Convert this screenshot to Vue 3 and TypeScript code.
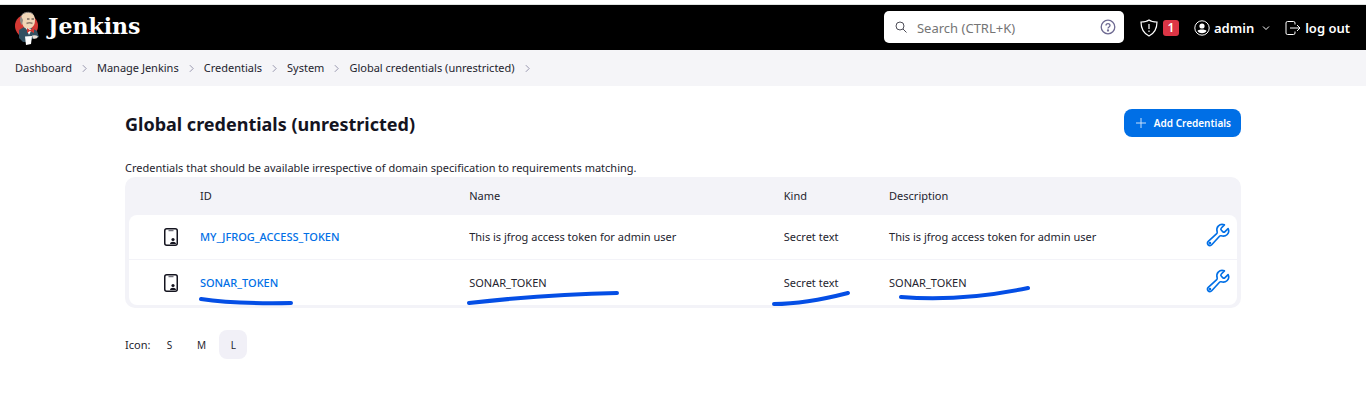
<script setup lang="ts">
import { ref } from 'vue'

interface Credential {
  id: string
  name: string
  kind: string
  description: string
}

const crumbs: string[] = [
  'Dashboard',
  'Manage Jenkins',
  'Credentials',
  'System',
  'Global credentials (unrestricted)',
]

const credentials: Credential[] = [
  {
    id: 'MY_JFROG_ACCESS_TOKEN',
    name: 'This is jfrog access token for admin user',
    kind: 'Secret text',
    description: 'This is jfrog access token for admin user',
  },
  { id: 'SONAR_TOKEN', name: 'SONAR_TOKEN', kind: 'Secret text', description: 'SONAR_TOKEN' },
]

const sizes: string[] = ['S', 'M', 'L']
const activeSize = ref<string>('L')
const query = ref<string>('')
</script>

<template>
  <div class="page">
    <header class="header">
      <a href="#" class="brand">
        <svg class="mascot" viewBox="0 0 26 34" aria-hidden="true">
          <ellipse cx="12.500" cy="15" rx="11.500" ry="11.500" fill="#d33833" />
          <path d="M5 19 L10 16 L18 17 L23 20 L25 26 L18 28 L16 31 L9 31 L5 27 Z" fill="#335061" />
          <path d="M7 8 C7 3 10 1 13.500 1 C18 1 21 4 21 9 C21 14 19 17 14 18 C10 18 8 14 7 8 Z" fill="#f0d6b7" />
          <path d="M7 5 C5 8 6 12 8 14 L9 9 Z" fill="#8f8a84" />
          <path d="M7 5 C9 1 16 0 19 3" fill="none" stroke="#6d6b6d" />
          <path d="M13 8 h2.500 M17.500 8 h2.500" fill="none" stroke="#3b3030" />
          <path d="M12.500 12.500 q3 -1.500 6 0" fill="none" stroke="#8f7a6a" stroke-width="1.400" />
          <path d="M12 17 L15 24 L18 18 Z" fill="#fff" />
          <path d="M13 17 L16 19 L20 16 L20 22 L16 20 L13 22 Z" fill="#d33833" />
          <path d="M11 25.500 L18 25 L17 33 L12 34 Z" fill="#fff" />
          <path d="M18 24.500 q4 -1 6 1 q-1 3 -5 2 Z" fill="#e6ded5" />
        </svg>
        <span class="brand-name">Jenkins</span>
      </a>
      <div class="header-tools">
        <form class="search" role="search" @submit.prevent>
          <svg class="search-icon" viewBox="0 0 12 12" aria-hidden="true">
            <circle cx="5" cy="5" r="4" />
            <path d="M8 8 L11.500 11.500" />
          </svg>
          <input v-model="query" type="search" aria-label="Search" placeholder="Search (CTRL+K)" />
          <a href="#" class="help" aria-label="Search help">
            <svg viewBox="0 0 16 16" aria-hidden="true">
              <circle cx="8" cy="8" r="6.800" />
              <path d="M6 6.500 C6 4 10 4 10 6.500 C10 8 8 8 8 9.500" />
              <circle cx="8" cy="11.500" r=".5" />
            </svg>
          </a>
        </form>
        <a href="#" class="alerts" aria-label="Security warnings">
          <svg viewBox="0 0 18 18" aria-hidden="true">
            <path d="M9 1 C7 2.500 4 3 1 3 C1 10 3 14 9 17 C15 14 17 10 17 3 C14 3 11 2.500 9 1 Z" />
            <path d="M9 5 V10 M9 11.500 V13" />
          </svg>
          <span class="badge">1</span>
        </a>
        <a href="#" class="user">
          <svg class="avatar" viewBox="0 0 16 16" aria-hidden="true">
            <circle cx="8" cy="8" r="7.200" />
            <circle cx="8" cy="6" r="2.600" class="solid" />
            <path class="solid" d="M3.500 11 C4 9 12 9 12.500 11 C10.500 14 5.500 14 3.500 11 Z" />
          </svg>
          <span>admin</span>
          <svg class="caret" viewBox="0 0 8 8" aria-hidden="true"><path d="M1 2.500 L4 5.500 L7 2.500" /></svg>
        </a>
        <a href="#" class="logout">
          <svg viewBox="0 0 16 16" aria-hidden="true">
            <path d="M10 4.500 V3 Q10 1.500 8.500 1.500 H2.500 Q1 1.500 1 3 V13 Q1 14.500 2.500 14.500 H8.500 Q10 14.500 10 13 V11.500" />
            <path d="M5 8 H15 M12 5 L15 8 L12 11" />
          </svg>
          <span>log out</span>
        </a>
      </div>
    </header>

    <nav class="crumbs" aria-label="Breadcrumb">
      <template v-for="crumb in crumbs" :key="crumb">
        <a href="#">{{ crumb }}</a>
        <svg viewBox="0 0 6 10" aria-hidden="true"><path d="M1 1 L5 5 L1 9" /></svg>
      </template>
    </nav>

    <main class="content">
      <div class="title-bar">
        <h1>Global credentials (unrestricted)</h1>
        <button type="button" class="add">
          <svg viewBox="0 0 10 10" aria-hidden="true"><path d="M5 0 V10 M0 5 H10" /></svg>
          <span>Add Credentials</span>
        </button>
      </div>
      <p class="intro">Credentials that should be available irrespective of domain specification to requirements matching.</p>

      <div class="table-box">
        <table>
          <colgroup>
            <col class="c-icon" />
            <col class="c-id" />
            <col class="c-name" />
            <col class="c-kind" />
            <col />
            <col class="c-tool" />
          </colgroup>
          <thead>
            <tr>
              <th></th>
              <th scope="col">ID</th>
              <th scope="col">Name</th>
              <th scope="col">Kind</th>
              <th scope="col">Description</th>
              <th></th>
            </tr>
          </thead>
          <tbody>
            <tr v-for="item in credentials" :key="item.id">
              <td class="type">
                <svg viewBox="0 0 14 18" aria-hidden="true">
                  <rect x=".75" y=".75" width="12.500" height="16.500" rx="2" />
                  <path d="M4.500 2.500 H9.500" class="clip" />
                  <circle cx="9" cy="11.500" r="1.600" class="solid" />
                  <path class="solid" d="M6 16 C6 13 12 13 12 16 Z" />
                </svg>
              </td>
              <td><a href="#">{{ item.id }}</a></td>
              <td>{{ item.name }}</td>
              <td>{{ item.kind }}</td>
              <td>{{ item.description }}</td>
              <td class="tool">
                <a href="#" :aria-label="`Update ${item.id}`">
                  <svg viewBox="0 0 512 512" aria-hidden="true">
                    <path d="M393.870 190a32.100 32.100 0 0 1-45.250 0l-26.570-26.570a32.090 32.090 0 0 1 0-45.260L382.190 58a1 1 0 0 0-.3-1.640c-38.820-16.640-89.150-8.160-121.110 23.570-30.580 30.350-32.320 76-21.120 115.840a31.930 31.930 0 0 1-9.060 32.080L64 380a48.170 48.170 0 1 0 68 68l153.860-167a31.930 31.930 0 0 1 31.600-9.130c39.540 10.590 84.540 8.600 114.720-21.190 32.490-32 39.500-88.560 23.750-120.930a1 1 0 0 0-1.600-.26z" />
                    <circle cx="96" cy="416" r="12" />
                  </svg>
                </a>
              </td>
            </tr>
          </tbody>
        </table>
        <svg class="marks" aria-hidden="true">
          <path d="M76 122 Q108 127 166 126" />
          <path d="M344 126 Q425 117 492 116" />
          <path d="M649 127 Q680 127 723 116" />
          <path d="M776 120 Q835 125 903 111" />
        </svg>
      </div>

      <div class="sizes">
        <span class="sizes-label">Icon:</span>
        <button
          v-for="size in sizes"
          :key="size"
          type="button"
          :class="{ active: size === activeSize }"
          @click="activeSize = size"
        >{{ size }}</button>
      </div>
    </main>
  </div>
</template>

<style>
body {
  margin: 0;
  background: #fff;
}
</style>

<style scoped>
.page {
  font-family: "Noto Sans", "Open Sans", sans-serif;
  font-size: 11px;
  line-height: 16px;
  color: #24242e;
}
.page * {
  box-sizing: border-box;
}
svg {
  display: block;
  flex: none;
  fill: none;
  stroke: currentColor;
}
a {
  color: inherit;
  text-decoration: none;
}
button,
input {
  font: inherit;
  color: inherit;
  border: 0;
}
.header {
  display: flex;
  align-items: center;
  justify-content: space-between;
  height: 46px;
  margin-top: 4px;
  padding: 0 16px 0 14px;
  border-top: 1px solid #dfe3e1;
  background: #000;
  color: #fff;
}
.brand {
  display: flex;
  align-items: center;
  gap: 8px;
}
.mascot {
  width: 26px;
  height: 34px;
  stroke: none;
}
.brand-name {
  padding-bottom: 4px;
  font: bold 22px/32px "DejaVu Serif", serif;
}
.header-tools,
.alerts,
.user,
.logout {
  display: flex;
  align-items: center;
}
.header-tools {
  font-size: 13px;
  font-weight: 600;
}
.search {
  display: flex;
  align-items: center;
  width: 240px;
  height: 32px;
  padding: 0 8px 0 11px;
  margin: 0 16px 2px 0;
  border-radius: 5px;
  background: #fff;
  color: #4c4c56;
  font-weight: 400;
}
.search-icon {
  width: 12px;
  height: 12px;
}
.search input {
  flex: 1;
  min-width: 0;
  height: 24px;
  margin-left: 10px;
  padding: 2px 0 0;
  background: none;
  outline: 0;
}
.search input::placeholder {
  color: #757575;
  opacity: 1;
}
.help {
  color: #6e6a92;
}
.help svg {
  width: 16px;
  height: 16px;
  stroke-width: 1.3;
}
.alerts {
  gap: 5px;
  margin-right: 15px;
}
.alerts svg {
  width: 18px;
  height: 18px;
  stroke-width: 1.2;
}
.badge {
  width: 16px;
  border-radius: 3px;
  background: #dc3545;
  font-size: 12px;
  text-align: center;
}
.user {
  gap: 4px;
  margin-right: 15px;
}
.avatar,
.logout svg {
  width: 16px;
  height: 16px;
}
.solid {
  fill: currentColor;
  stroke: none;
}
.caret {
  width: 8px;
  height: 8px;
  margin-left: 4px;
}
.logout {
  gap: 4px;
}
.crumbs {
  display: flex;
  align-items: center;
  gap: 10px;
  height: 36px;
  padding: 0 15px;
  background: #f5f5f8;
}
.crumbs svg {
  width: 5px;
  height: 9px;
  color: #8584a0;
}
.content {
  padding: 23px 125px 0;
}
.title-bar {
  display: flex;
  justify-content: space-between;
  align-items: flex-start;
}
h1 {
  margin: 0;
  font-size: 18px;
  line-height: 30px;
  font-weight: 700;
  color: #14141f;
}
.add {
  display: flex;
  align-items: center;
  gap: 8px;
  height: 28px;
  padding: 0 10px 0 12px;
  border-radius: 8px;
  background: #006fe6;
  color: #fff;
  font-size: 10px;
  font-weight: 600;
}
.add svg {
  width: 10px;
  height: 10px;
  opacity: 0.8;
}
.intro {
  margin: 21px 0 1px;
}
.table-box {
  position: relative;
  padding: 0 4px 3px;
  border-radius: 10px;
  background: #f3f3f8;
}
table {
  width: 100%;
  table-layout: fixed;
  border-collapse: separate;
  border-spacing: 0;
}
.c-icon {
  width: 6.4%;
}
.c-id {
  width: 24.3%;
}
.c-name {
  width: 28.4%;
}
.c-kind {
  width: 9.5%;
}
.c-tool {
  width: 32px;
}
th,
td {
  padding: 0;
  text-align: left;
  font-weight: 400;
}
th {
  height: 38px;
}
td {
  height: 45px;
  background: #fff;
}
tbody tr:first-child td {
  border-bottom: 1px solid #f3f3f8;
}
tbody tr:first-child td:first-child {
  border-radius: 8px 0 0;
}
tbody tr:first-child td:last-child {
  border-radius: 0 8px 0 0;
}
tbody tr:last-child td:first-child {
  border-radius: 0 0 0 8px;
}
tbody tr:last-child td:last-child {
  border-radius: 0 0 8px;
}
td a {
  color: #006fe6;
  font-weight: 500;
}
.type svg {
  width: 14px;
  height: 18px;
  margin-left: 35px;
  color: #14141f;
  stroke-width: 1.5;
}
.clip {
  stroke: #73737d;
}
.tool svg {
  width: 26px;
  height: 26px;
  margin-bottom: 4px;
  stroke-width: 32;
}
.marks {
  position: absolute;
  inset: 0;
  width: 100%;
  height: 100%;
  overflow: visible;
  pointer-events: none;
  color: #044ee5;
  stroke-width: 4;
  stroke-linecap: round;
}
.sizes {
  display: flex;
  align-items: center;
  gap: 4px;
  margin-top: 22px;
}
.sizes-label {
  margin-right: 1px;
}
.sizes button {
  width: 28px;
  height: 29px;
  padding: 0;
  border-radius: 8px;
  background: none;
  font-size: 10px;
}
.sizes .active {
  background: #f1f0f7;
}
</style>
